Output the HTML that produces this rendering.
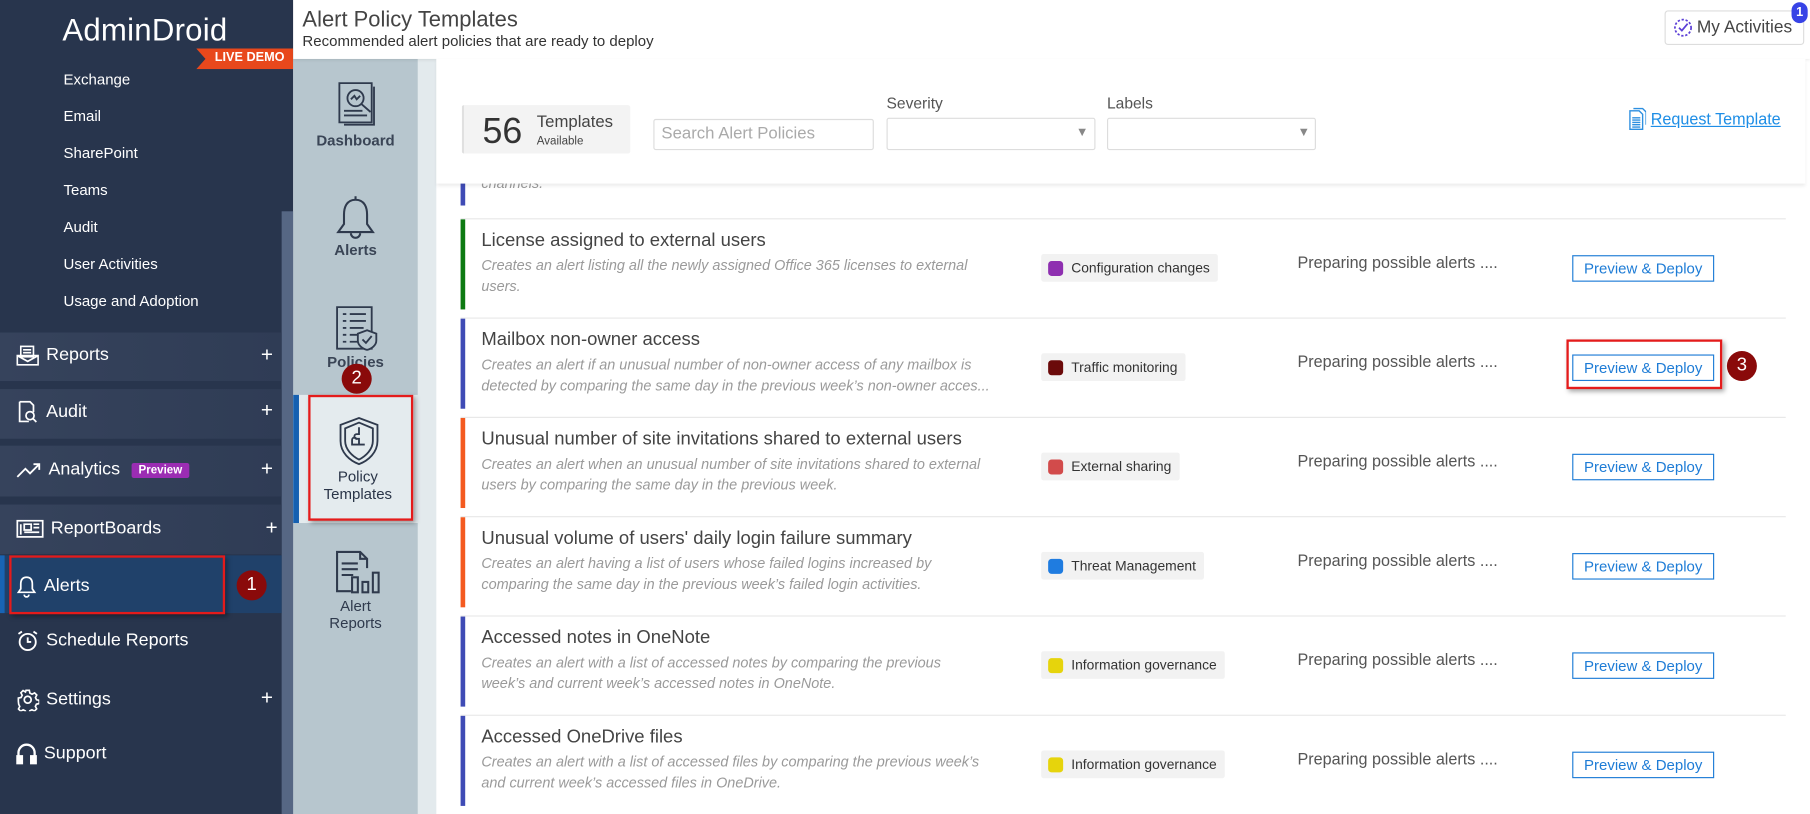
<!DOCTYPE html>
<html><head><meta charset="utf-8"><style>
*{box-sizing:border-box;margin:0;padding:0}
html,body{width:1810px;height:814px;overflow:hidden;background:#fff}
#w{position:absolute;left:0;top:0;width:1568px;height:705px;transform:scale(1.15434,1.1546);transform-origin:0 0;font-family:"Liberation Sans",sans-serif;}
.a{position:absolute}
.side{left:0;top:0;width:254px;height:705px;background:#28354d}
.sub{position:absolute;left:55px;color:#fff;font-size:13px}
.band{position:absolute;left:0;width:244px;background:linear-gradient(90deg,#36435c,#2f3c55)}
.mi{position:absolute;left:14px;color:#fff;font-size:15.5px;display:flex;align-items:center;gap:6px}
.plus{position:absolute;left:226px;color:#fff;font-size:18px}
.col2{left:254px;top:51px;width:108px;height:654px;background:#b7c6ce}
.nl{position:absolute;width:108px;text-align:center;color:#2f3a4d;font-size:13px;line-height:15px}
.row{position:absolute;left:399px;width:1148px;height:86px;border-top:1px solid #e8e8e8}
.bar{position:absolute;left:0;top:0;width:4px;height:78px}
.ti{position:absolute;left:18px;top:10px;font-size:16px;color:#444}
.de{position:absolute;left:18px;top:31px;font-size:12.5px;color:#9a9a9a;font-style:italic;line-height:18px;width:462px}
.tag{position:absolute;left:503px;top:30px;height:24px;background:#f2f2f2;border-radius:2px;padding:0 7px 0 6px;font-size:12px;color:#333;display:flex;align-items:center;gap:7px}
.tag i{display:block;width:13px;height:13px;border-radius:3px}
.pr{position:absolute;left:725px;top:29px;font-size:14px;color:#555}
.btn{position:absolute;left:963px;top:31px;width:123px;height:23px;border:1px solid #1e7cd6;color:#1e7cd6;font-size:13px;text-align:center;line-height:21px;background:#fff}
.red{position:absolute;border:2px solid #e41b1b;box-shadow:2px 2px 4px rgba(0,0,0,.35)}
.num{position:absolute;width:26px;height:26px;border-radius:50%;background:#8a0a0a;color:#fff;font-size:16px;text-align:center;line-height:26px}
</style></head><body><div id="w">
<div class="a side"></div>
<div class="a" style="left:244px;top:183px;width:10px;height:522px;background:#566784"></div>
<div class="a" style="left:54px;top:11px;color:#fff;font-size:27px;letter-spacing:.2px">AdminDroid</div>
<div class="a" style="left:170px;top:42px;width:84px;height:18px;background:#e8481c;clip-path:polygon(0 0,100% 0,100% 100%,0 100%,8px 50%)"></div>
<div class="a" style="left:186px;top:44px;color:#fff;font-size:11px;font-weight:bold">LIVE DEMO</div>
<div class="sub" style="top:61px">Exchange</div>
<div class="sub" style="top:93px">Email</div>
<div class="sub" style="top:125px">SharePoint</div>
<div class="sub" style="top:157px">Teams</div>
<div class="sub" style="top:189px">Audit</div>
<div class="sub" style="top:221px">User Activities</div>
<div class="sub" style="top:253px">Usage and Adoption</div>

<div class="band" style="top:288px;height:42px"></div>
<div class="mi" style="top:299px"><svg width="20" height="18" viewBox="0 0 20 18" fill="none" stroke="#fff" stroke-width="1.4"><rect x="4" y="1" width="11" height="9"/><path d="M6 4h7M6 6.5h7M1 9h18v8H1zM1 9l9 5 9-5"/></svg>Reports</div><div class="plus" style="top:297px">+</div>
<div class="band" style="top:337px;height:43px"></div>
<div class="mi" style="top:347px"><svg width="20" height="20" viewBox="0 0 20 20" fill="none" stroke="#fff" stroke-width="1.5"><path d="M3 1h9l3 3v6M3 1v17h8"/><circle cx="12" cy="13" r="3.5"/><path d="M14.5 15.5l3 3"/></svg>Audit</div><div class="plus" style="top:345px">+</div>
<div class="band" style="top:386px;height:44px"></div>
<div class="mi" style="top:398px"><svg width="22" height="14" viewBox="0 0 22 14" fill="none" stroke="#fff" stroke-width="1.6"><path d="M1 13l7-7 4 4 8-8M15 2h5v5"/></svg>Analytics <span style="background:#9b2db3;color:#fff;font-size:10px;font-weight:bold;padding:1px 6px;margin-left:4px;border-radius:2px">Preview</span></div><div class="plus" style="top:396px">+</div>
<div class="band" style="top:437px;height:43px"></div>
<div class="mi" style="top:449px"><svg width="24" height="16" viewBox="0 0 24 16" fill="none" stroke="#fff" stroke-width="1.5"><rect x="1" y="1" width="22" height="14"/><path d="M4 4v9M7 4h6v5H7zM15 4h5M15 7h5M7 11h13"/></svg>ReportBoards</div><div class="plus" style="left:230px;top:447px">+</div>
<div class="a" style="left:0;top:481px;width:244px;height:50px;background:#20416a"></div>
<div class="a" style="left:0;top:481px;width:4px;height:50px;background:#1864b4"></div>
<div class="mi" style="top:498px"><svg width="18" height="20" viewBox="0 0 18 20" fill="none" stroke="#fff" stroke-width="1.5"><path d="M9 2c-4 0-5 3-5 6v4l-2 3h14l-2-3V8c0-3-1-6-5-6zM7 17a2 2 0 004 0"/></svg>Alerts</div>
<div class="mi" style="top:545px"><svg width="20" height="20" viewBox="0 0 20 20" fill="none" stroke="#fff" stroke-width="1.6"><circle cx="10" cy="11" r="7"/><path d="M10 7v4h3M2 4l3-2M18 4l-3-2"/></svg>Schedule Reports</div>
<div class="mi" style="top:596px"><svg width="20" height="20" viewBox="0 0 20 20" fill="none" stroke="#fff" stroke-width="1.5"><circle cx="10" cy="10" r="3"/><path d="M8.5 1.5h3l.5 2.5 2 1 2.3-1.2 2 2-1.2 2.3 1 2 2.4.5v3l-2.5.5-1 2 1.2 2.3-2 2-2.3-1.2-2 1-.5 2.6h-3l-.5-2.5-2-1-2.3 1.2-2-2 1.2-2.3-1-2L1.5 11.5v-3L4 8l1-2-1.2-2.3 2-2L8 3z" transform="scale(.95) translate(.5 .5)"/></svg>Settings</div><div class="plus" style="top:594px">+</div>
<div class="mi" style="top:643px"><svg width="18" height="20" viewBox="0 0 18 20" fill="none" stroke="#fff" stroke-width="2"><path d="M2 13V9a7 7 0 0114 0v4"/><rect x="1" y="12" width="4" height="6" fill="#fff"/><rect x="13" y="12" width="4" height="6" fill="#fff"/></svg>Support</div>

<div class="a col2"></div>
<div class="a" style="left:362px;top:51px;width:16px;height:654px;background:#e3eaed"></div>
<svg class="a" style="left:290px;top:70px" width="40" height="40" viewBox="0 0 40 40" fill="none" stroke="#2f3a4d" stroke-width="1.6"><path d="M4 2h28v34H4zM34 5v33H8"/><circle cx="18" cy="15" r="7"/><path d="M23 20l8 7M14 16l3-3 2 3 3-3M8 26h16M8 30h20"/></svg>
<div class="nl" style="left:254px;top:114px;font-weight:bold;color:#3a4556">Dashboard</div>
<svg class="a" style="left:290px;top:168px" width="36" height="40" viewBox="0 0 36 40" fill="none" stroke="#2f3a4d" stroke-width="1.8"><path d="M18 2v3M18 5c-8 0-10 7-10 13v8l-5 7h30l-5-7v-8c0-6-2-13-10-13zM14 34a4 4 0 008 0"/></svg>
<div class="nl" style="left:254px;top:209px;font-weight:bold;color:#3a4556">Alerts</div>
<svg class="a" style="left:290px;top:264px" width="40" height="40" viewBox="0 0 40 40" fill="none" stroke="#2f3a4d" stroke-width="1.6"><path d="M2 2h30v36H2z"/><path d="M7 8h3M13 8h14M7 14h3M13 14h14M7 20h3M13 20h12M7 26h3M13 26h8M7 32h3M13 32h8"/><path d="M28 22l8 3v6c0 4-4 7-8 8-4-1-8-4-8-8v-6z" fill="#b7c6ce"/><path d="M24 30l3 3 5-6"/></svg>
<div class="nl" style="left:254px;top:306px;font-weight:bold;color:#3a4556">Policies</div>
<div class="a" style="left:254px;top:342px;width:108px;height:111px;background:#e4ebee"></div>
<div class="a" style="left:254px;top:342px;width:5px;height:111px;background:#1560b0"></div>
<svg class="a" style="left:293px;top:360px" width="36" height="44" viewBox="0 0 36 44" fill="none" stroke="#2f3a4d" stroke-width="1.6"><path d="M18 2l16 6v14c0 10-8 17-16 20C10 39 2 32 2 22V8z"/><path d="M18 6l12 5v11c0 7-6 13-12 16-6-3-12-9-12-16V11z"/><path d="M18 10v6h-2a2 2 0 000 4h2v5h5M18 25h-6v-4a2 2 0 014 0"/></svg>
<div class="nl" style="left:256px;top:405px;color:#2a3548">Policy<br>Templates</div>
<svg class="a" style="left:290px;top:476px" width="40" height="40" viewBox="0 0 40 40" fill="none" stroke="#2f3a4d" stroke-width="1.8"><path d="M14 36H2V2h20l6 6v8M22 2v6h6M6 12h14M6 17h14M6 22h10"/><rect x="15" y="24" width="5" height="13"/><rect x="24" y="28" width="5" height="9"/><rect x="33" y="20" width="5" height="17"/></svg>
<div class="nl" style="left:254px;top:517px;color:#2f3a4d">Alert<br>Reports</div>

<div class="a" style="left:254px;top:0;width:1314px;height:51px;background:#fff;box-shadow:0 1px 3px rgba(0,0,0,.1)"></div>
<div class="a" style="left:262px;top:7px;font-size:19px;color:#444">Alert Policy Templates</div>
<div class="a" style="left:262px;top:28px;font-size:13px;color:#333">Recommended alert policies that are ready to deploy</div>
<div class="a" style="left:1442px;top:9px;width:121px;height:30px;border:1px solid #ddd;border-radius:3px;background:#fff"></div>
<svg class="a" style="left:1449px;top:15px" width="18" height="18" viewBox="0 0 18 18" fill="none" stroke="#5b3fd6" stroke-width="1.5"><circle cx="9" cy="9" r="7" stroke-dasharray="2 1.5"/><path d="M5.5 9l2.5 2.5 5-6"/></svg>
<div class="a" style="left:1470px;top:15px;font-size:15px;color:#444">My Activities</div>
<div class="a" style="left:1552px;top:2px;width:14px;height:18px;border-radius:7px;background:#3743e6;color:#fff;font-size:11px;text-align:center;line-height:18px;font-weight:bold">1</div>

<div class="a" style="left:399px;top:140px;width:4px;height:38px;background:#3f4bb5"></div>
<div class="a" style="left:417px;top:152px;font-size:12.5px;color:#9a9a9a;font-style:italic">channels.</div>

<div class="row" style="top:189px"><div class="bar" style="background:#0d7a12"></div><div class="ti">License assigned to external users</div><div class="de" style="width:440px">Creates an alert listing all the newly assigned Office 365 licenses to external users.</div><div class="tag"><i style="background:#8e2fb0"></i>Configuration changes</div><div class="pr">Preparing possible alerts ....</div><div class="btn">Preview &amp; Deploy</div></div>
<div class="row" style="top:275px"><div class="bar" style="background:#3f4bb5"></div><div class="ti">Mailbox non-owner access</div><div class="de">Creates an alert if an unusual number of non-owner access of any mailbox is detected by comparing the same day in the previous week’s non-owner acces...</div><div class="tag"><i style="background:#6b0a0a"></i>Traffic monitoring</div><div class="pr">Preparing possible alerts ....</div><div class="btn">Preview &amp; Deploy</div></div>
<div class="row" style="top:361px"><div class="bar" style="background:#f45a20"></div><div class="ti">Unusual number of site invitations shared to external users</div><div class="de">Creates an alert when an unusual number of site invitations shared to external users by comparing the same day in the previous week.</div><div class="tag"><i style="background:#d24b4b"></i>External sharing</div><div class="pr">Preparing possible alerts ....</div><div class="btn">Preview &amp; Deploy</div></div>
<div class="row" style="top:447px"><div class="bar" style="background:#f45a20"></div><div class="ti">Unusual volume of users' daily login failure summary</div><div class="de" style="width:420px">Creates an alert having a list of users whose failed logins increased by comparing the same day in the previous week’s failed login activities.</div><div class="tag"><i style="background:#1f7ce0"></i>Threat Management</div><div class="pr">Preparing possible alerts ....</div><div class="btn">Preview &amp; Deploy</div></div>
<div class="row" style="top:533px"><div class="bar" style="background:#3f4bb5"></div><div class="ti">Accessed notes in OneNote</div><div class="de" style="width:430px">Creates an alert with a list of accessed notes by comparing the previous week’s and current week’s accessed notes in OneNote.</div><div class="tag"><i style="background:#e6d40c"></i>Information governance</div><div class="pr">Preparing possible alerts ....</div><div class="btn">Preview &amp; Deploy</div></div>
<div class="row" style="top:619px"><div class="bar" style="background:#3f4bb5"></div><div class="ti">Accessed OneDrive files</div><div class="de" style="width:450px">Creates an alert with a list of accessed files by comparing the previous week’s and current week’s accessed files in OneDrive.</div><div class="tag"><i style="background:#e6d40c"></i>Information governance</div><div class="pr">Preparing possible alerts ....</div><div class="btn">Preview &amp; Deploy</div></div>

<div class="a" style="left:378px;top:51px;width:1186px;height:108px;background:#fff;box-shadow:0 2px 3px rgba(0,0,0,.08)"></div>
<div class="a" style="left:400px;top:91px;width:146px;height:42px;background:#f3f3f3;border-left:2px solid #e0e0e0;border-radius:2px"></div>
<div class="a" style="left:418px;top:96px;font-size:31px;color:#333">56</div>
<div class="a" style="left:465px;top:98px;font-size:14.5px;color:#444">Templates</div>
<div class="a" style="left:465px;top:117px;font-size:10px;color:#444">Available</div>
<div class="a" style="left:566px;top:103px;width:191px;height:27px;border:1px solid #ddd;border-radius:2px"></div>
<div class="a" style="left:573px;top:108px;font-size:14.5px;color:#aaa">Search Alert Policies</div>
<div class="a" style="left:768px;top:82px;font-size:13.5px;color:#555">Severity</div>
<div class="a" style="left:768px;top:102px;width:181px;height:28px;border:1px solid #ddd;border-radius:2px"></div>
<div class="a" style="left:932px;top:109px;font-size:11px;color:#888">▼</div>
<div class="a" style="left:959px;top:82px;font-size:13.5px;color:#555">Labels</div>
<div class="a" style="left:959px;top:102px;width:181px;height:28px;border:1px solid #ddd;border-radius:2px"></div>
<div class="a" style="left:1124px;top:109px;font-size:11px;color:#888">▼</div>
<svg class="a" style="left:1408px;top:93px" width="18" height="20" viewBox="0 0 18 20" fill="none" stroke="#2d8fe0" stroke-width="1.2"><path d="M4 3h8l3 3v13H4zM7 1h8l3 3v11M6 9h7M6 11h7M6 13h7M6 15h7M6 17h7"/></svg>
<div class="a" style="left:1430px;top:95px;font-size:14px;color:#1e8ee6;text-decoration:underline">Request Template</div>

<div class="red" style="left:8px;top:481px;width:187px;height:51px"></div>
<div class="num" style="left:205px;top:494px">1</div>
<div class="red" style="left:267px;top:342px;width:91px;height:109px"></div>
<div class="num" style="left:296px;top:315px">2</div>
<div class="red" style="left:1357px;top:294px;width:135px;height:43px"></div>
<div class="num" style="left:1496px;top:304px">3</div>
</div></body></html>
